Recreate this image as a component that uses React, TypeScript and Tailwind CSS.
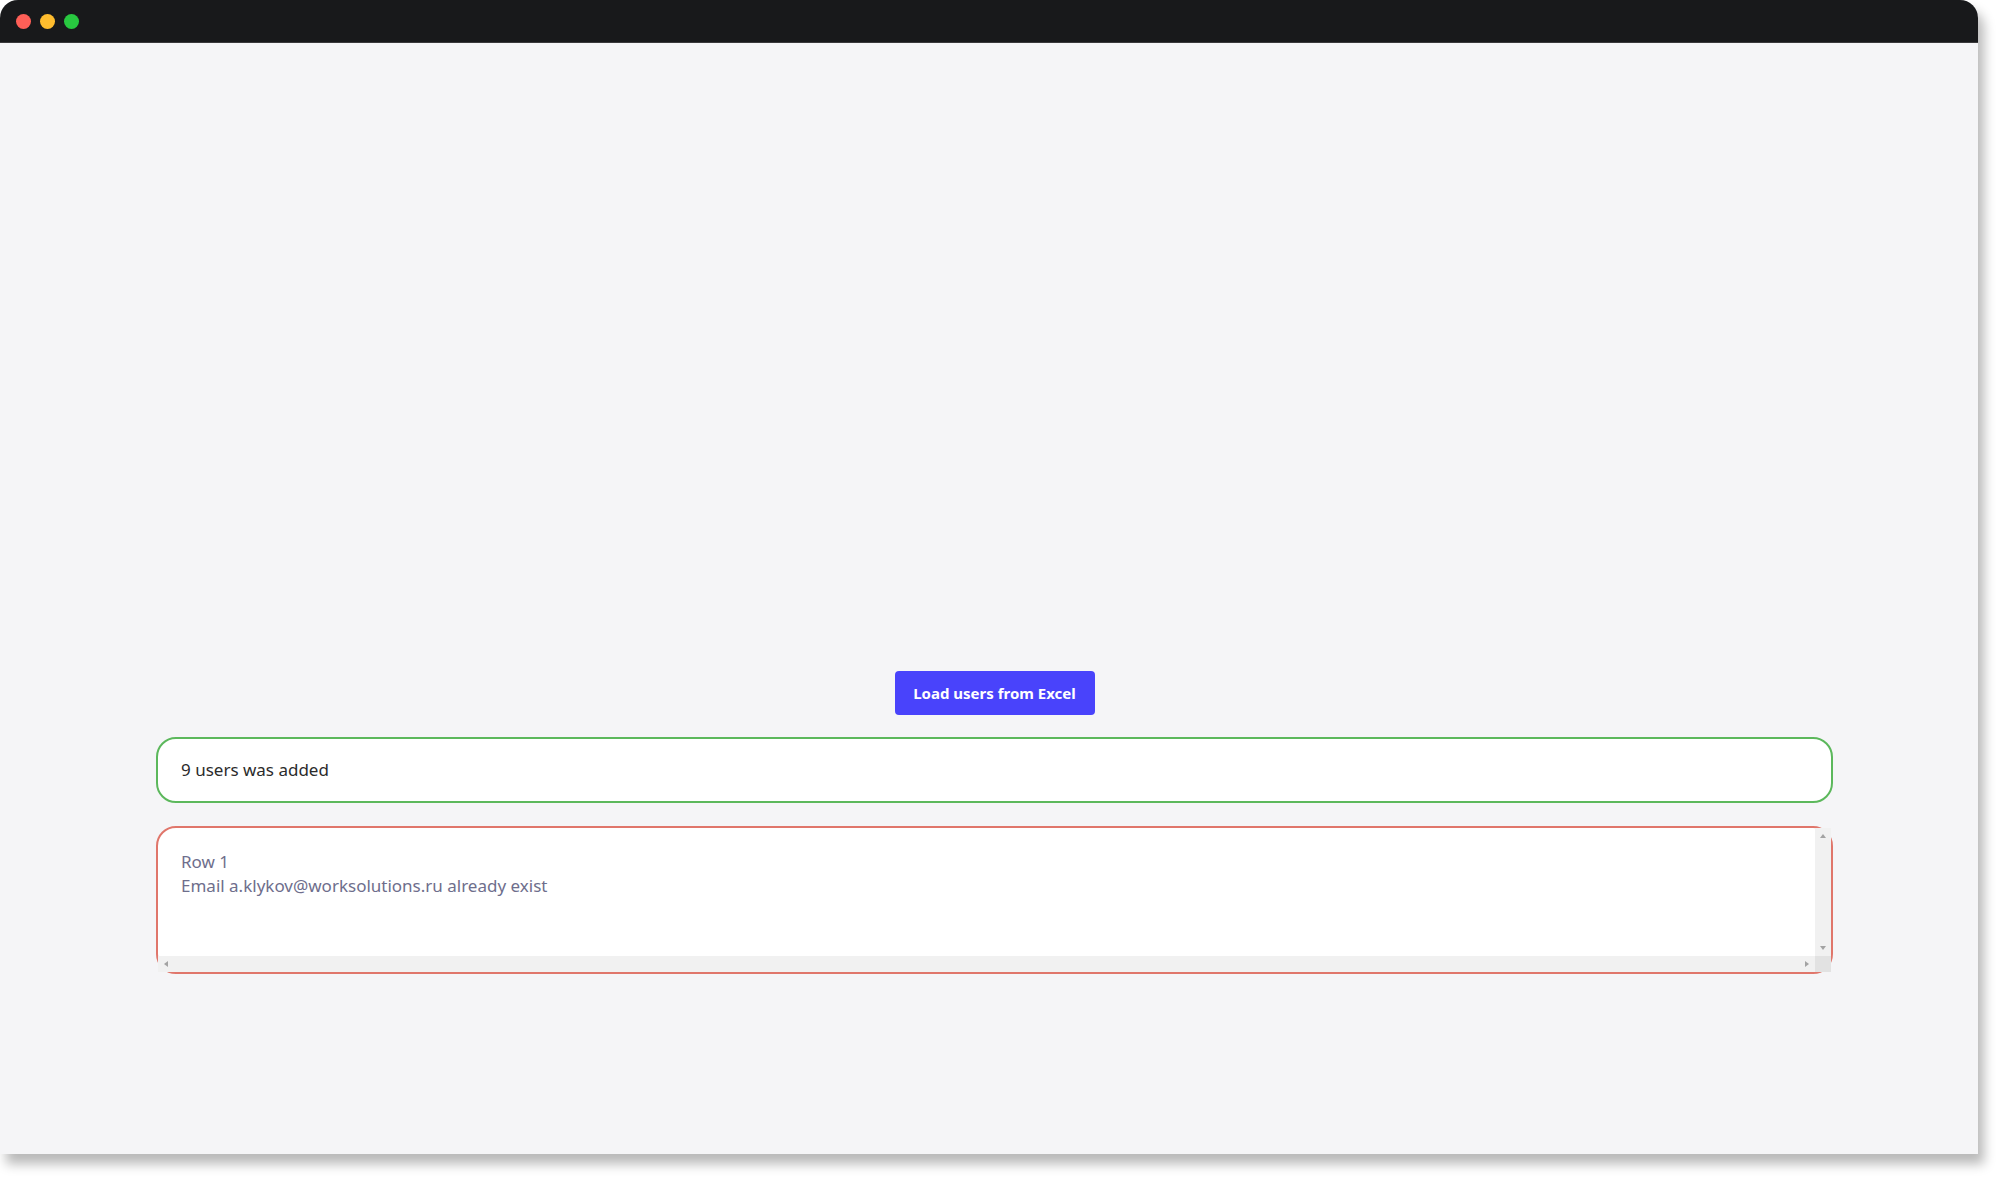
const font = { fontFamily: '"Noto Sans", "Open Sans", sans-serif' }

const Arrow = ({ dir }: { dir: "up" | "down" | "left" | "right" }) => {
  const pts = {
    up: "1,6 4,2 7,6",
    down: "1,2 4,6 7,2",
    left: "6,1 2,4 6,7",
    right: "2,1 6,4 2,7",
  }[dir]
  return (
    <svg width="8" height="8" viewBox="0 0 8 8">
      <polygon points={pts} fill="#a3a3a3" />
    </svg>
  )
}

export default function App() {
  return (
    <div className="h-[1177px] w-[1999px] overflow-hidden bg-white" style={font}>
      <div className="flex h-[1154px] w-[1978px] flex-col overflow-hidden rounded-t-[18px] bg-[#f5f5f7] shadow-[6px_10px_12px_rgba(0,0,0,0.28)]">
        <div className="flex h-[43px] shrink-0 items-center gap-[9px] border-b border-[#3a3a3c] bg-[#18191b] pl-[16px]">
          <span className="h-[15px] w-[15px] rounded-full bg-[#fe5f57]" />
          <span className="h-[15px] w-[15px] rounded-full bg-[#febc2e]" />
          <span className="h-[15px] w-[15px] rounded-full bg-[#28c840]" />
        </div>
        <div className="flex flex-col pl-[156px] pr-[145px] pt-[628px]">
          <div className="flex justify-center">
            <button className="h-[44px] w-[200px] rounded-[4px] bg-[#4943fb] text-[15px] font-bold text-white">
              Load users from Excel
            </button>
          </div>
          <div className="mt-[22px] flex h-[66px] items-center rounded-[20px] border-2 border-[#5cb85c] bg-white pl-[23px] text-[17px] text-[#2b2b2b]">
            9 users was added
          </div>
          <div className="mt-[23px] flex h-[148px] flex-col rounded-[20px] border-2 border-[#e0766b] bg-white">
            <div className="flex flex-1">
              <div className="flex-1 pl-[23px] pt-[22px] text-[17px] leading-[24px] text-[#6e6e8c]">
                <div>Row 1</div>
                <div>Email a.klykov@worksolutions.ru already exist</div>
              </div>
              <div className="flex w-[16px] flex-col items-center justify-between bg-[#f1f1f1] py-[4px]">
                <Arrow dir="up" />
                <Arrow dir="down" />
              </div>
            </div>
            <div className="flex h-[16px]">
              <div className="flex flex-1 items-center justify-between bg-[#f1f1f1] px-[4px]">
                <Arrow dir="left" />
                <Arrow dir="right" />
              </div>
              <div className="w-[16px] bg-[#e2e2e2]" />
            </div>
          </div>
        </div>
      </div>
    </div>
  )
}
